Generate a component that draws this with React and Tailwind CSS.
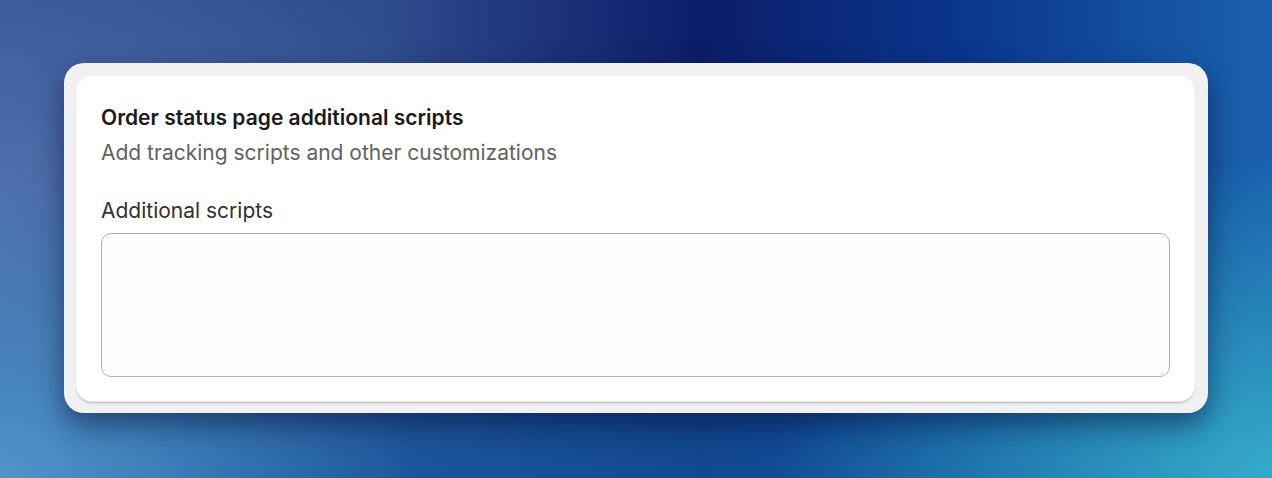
import React from "react";

export default function App() {
  return (
    <div
      className="relative h-[478px] w-[1272px] overflow-hidden bg-[radial-gradient(ellipse_420px_300px_at_0%_100%,rgba(90,160,210,0.85),transparent),radial-gradient(ellipse_500px_320px_at_100%_100%,rgba(56,180,205,0.9),transparent),radial-gradient(ellipse_500px_260px_at_0%_40%,rgba(100,140,195,0.5),transparent),linear-gradient(to_bottom,transparent_40%,rgba(20,90,160,0.75)_100%),linear-gradient(90deg,#385494_0%,#2f4c8e_30%,#0b1d68_55%,#0a358c_75%,#1a62ad_100%)]"
      style={{ fontFamily: "Inter, 'Noto Sans', sans-serif" }}
    >
      <div className="px-[64px] pt-[63px]">
        <div className="rounded-[20px] bg-[#f1f1f1] pt-[13px] pl-[12px] pr-[13px] pb-[11px] shadow-[0_12px_28px_rgba(5,20,60,0.55)]">
          <div className="rounded-[16px] bg-white px-[25px] pt-[28px] pb-[25px] shadow-[0_1px_0_rgba(0,0,0,0.12),0_2px_3px_rgba(0,0,0,0.08),inset_0_-1px_0_rgba(0,0,0,0.08)]">
            <div className="text-[21px] font-semibold leading-7 text-[#1a1a1a]">
              Order status page additional scripts
            </div>
            <div className="mt-[7px] text-[21px] leading-7 text-[#616161]">
              Add tracking scripts and other customizations
            </div>
            <div className="mt-[30px] text-[21px] leading-7 text-[#303030]">
              Additional scripts
            </div>
            <textarea
              className="mt-[8px] block h-[144px] w-full resize-none rounded-[10px] border border-[#b2b2b2] bg-[#fdfdfd] outline-none"
              aria-label="Additional scripts"
            />
          </div>
        </div>
      </div>
    </div>
  );
}
